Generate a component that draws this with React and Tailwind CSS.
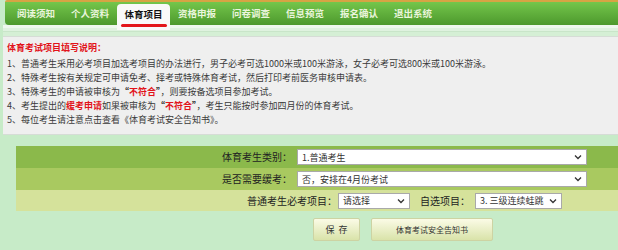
const NAV = ["阅读须知", "个人资料", "体育项目", "资格申报", "问卷调查", "信息预览", "报名确认", "退出系统"];

function Chevron() {
  return (
    <svg width="8" height="6" viewBox="0 0 8 6" className="shrink-0">
      <path d="M1 1.5 L4 4.5 L7 1.5" fill="none" stroke="#333" strokeWidth="1.3" />
    </svg>
  );
}

function FakeSelect({ value, className }) {
  return (
    <div
      className={`h-[16px] bg-white border border-[#a9a9a9] flex items-center justify-between pl-[4px] pr-[4px] text-[9px] text-[#333] leading-none ${className}`}
    >
      <span className="whitespace-nowrap">{value}</span>
      <Chevron />
    </div>
  );
}

export default function App() {
  return (
    <div className="w-[618px] h-[250px] overflow-hidden bg-[#c7ebc8] font-['Noto_Sans_CJK_SC','Noto_Sans',sans-serif]">
      {/* top bar */}
      <div className="ml-[5px] h-[2px] bg-[#d6a444] rounded-tl-[3px]" />
      <div className="relative z-10 ml-[5px] h-[23px] bg-gradient-to-b from-[#74c64b] to-[#4d992d] rounded-bl-[4px] flex items-center pl-[4px]">
        {NAV.map((n) =>
          n === "体育项目" ? (
            <div
              key={n}
              className="self-start mt-[2px] h-[26px] w-[53px] bg-[#f9f9f9] rounded-t-[4px] flex flex-col items-center pt-[4px]"
            >
              <span className="text-[9.5px] font-bold text-[#111] leading-[12px]">{n}</span>
              <div className="mt-[4px] h-[3px] w-[46px] rounded-full bg-[#e3161b]" />
            </div>
          ) : (
            <div key={n} className="w-[54px] text-center text-[9.5px] font-bold text-[#eaf5dc] leading-none">
              {n}
            </div>
          )
        )}
      </div>
      <div className="ml-[3px]">
        <div className="h-[3px] bg-[#eef8ee]" />
        <div className="h-[3px] bg-[#dff2df]" />
        <div className="h-[1px] bg-[#c9e5c9]" />
        <div className="h-[4px] bg-[#d5efd5]" />
      </div>

      {/* notes */}
      <div className="ml-[3px] h-[99px] bg-[#efefef] border-t border-b border-[#d6dcd6] pl-[4px] pt-[4px] text-[9px] leading-[14px] text-[#3a3a3a] whitespace-nowrap">
        <div className="text-[#e2131a] font-bold mb-[2px]">体育考试项目填写说明：</div>
        <div>1、普通考生采用必考项目加选考项目的办法进行，男子必考可选1000米或100米游泳，女子必考可选800米或100米游泳。</div>
        <div>2、特殊考生按有关规定可申请免考、择考或特殊体育考试，然后打印考前医务审核申请表。</div>
        <div>
          3、特殊考生的申请被审核为<span className="font-bold text-[#222]">“</span>
          <span className="font-bold text-[#e2131a]">不符合</span>
          <span className="font-bold text-[#222]">”</span>，则要按备选项目参加考试。
        </div>
        <div>
          4、考生提出的<span className="font-bold text-[#e2131a]">缓考申请</span>如果被审核为
          <span className="font-bold text-[#222]">“</span>
          <span className="font-bold text-[#e2131a]">不符合</span>
          <span className="font-bold text-[#222]">”</span>，考生只能按时参加四月份的体育考试。
        </div>
        <div>5、每位考生请注意点击查看《体育考试安全告知书》。</div>
      </div>

      {/* form */}
      <div className="ml-[16px] mt-[11px] w-[780px] text-[10px] text-[#222] leading-none">
        <div className="h-[22px] bg-[#8bb94b] flex items-center">
          <div className="w-[276px] text-right">体育考生类别：</div>
          <FakeSelect value="1.普通考生" className="ml-[5px] w-[290px]" />
        </div>
        <div className="h-[22px] bg-[#a9c960] flex items-center">
          <div className="w-[276px] text-right">是否需要缓考：</div>
          <FakeSelect value="否，安排在4月份考试" className="ml-[5px] w-[290px]" />
        </div>
        <div className="h-[21px] bg-[#d5e29b] flex items-center pl-[231px]">
          <span>普通考生必考项目：</span>
          <FakeSelect value="请选择" className="ml-[1px] w-[72px]" />
          <span className="ml-[10px]">自选项目：</span>
          <FakeSelect value="3. 三级连续蛙跳" className="ml-[5px] w-[87px]" />
        </div>
      </div>

      <div className="mt-[7px] ml-[313px] flex gap-[11px]">
        <button className="w-[47px] h-[23px] border border-[#cdd3a3] rounded-[2px] bg-gradient-to-b from-[#fbfbe6] to-[#d9e3a9] text-[9px] text-[#333] leading-none">
          保&nbsp;&nbsp;存
        </button>
        <button className="w-[122px] h-[23px] border border-[#cdd3a3] rounded-[2px] bg-gradient-to-b from-[#fbfbe6] to-[#d9e3a9] text-[8px] text-[#333] leading-none">
          体育考试安全告知书
        </button>
      </div>
    </div>
  );
}
